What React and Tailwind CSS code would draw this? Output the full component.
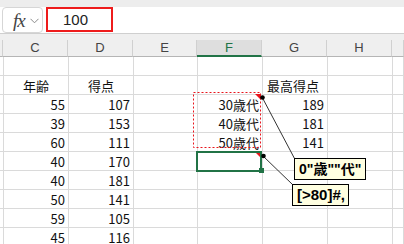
import React from "react";

const W = ["w-[3px]", "w-[65px]", "w-[65px]", "w-[64px]", "w-[65px]", "w-[65px]", "w-[65px]", "flex-1"];

const rows = [
  [null, null, null, null, null, null],
  [{ t: "年齢", a: "c" }, { t: "得点", a: "c" }, null, null, { t: "最高得点", a: "l" }, null],
  ["55", "107", null, "30歳代", "189", null],
  ["39", "153", null, "40歳代", "181", null],
  ["60", "111", null, "50歳代", "141", null],
  ["40", "170", null, null, null, null],
  ["40", "181", null, null, null, null],
  ["50", "141", null, null, null, null],
  ["59", "105", null, null, null, null],
  ["45", "116", null, null, null, null],
];

function Cell({ w, v }) {
  let text = null;
  let align = "justify-end pr-[3px]";
  if (v && typeof v === "object") {
    text = v.t;
    align = v.a === "c" ? "justify-center" : "justify-start pl-[4px]";
  } else if (v) {
    text = v;
  }
  return (
    <div className={`${w} h-full shrink-0 border-r border-b border-[#dadada] flex items-center ${align} overflow-hidden whitespace-nowrap`}>
      {text}
    </div>
  );
}

export default function App() {
  const headers = ["", "C", "D", "E", "F", "G", "H", ""];
  return (
    <div
      className="relative w-[404px] h-[244px] overflow-hidden bg-white text-[#111]"
      style={{ fontFamily: '"Noto Sans CJK JP", "Liberation Sans", sans-serif' }}
    >
      {/* top strip */}
      <div className="h-[7px] bg-[#ededed]" />
      {/* formula bar */}
      <div className="h-[27px] flex items-start bg-white border-b border-[#cfcfcf]">
        <div className="ml-[2px] w-[41px] h-[26px] border border-[#d6d6d6] rounded-[4px] flex items-center pl-[10px] gap-[5px]">
          <span
            className="italic text-[19px] leading-none text-[#444] tracking-[-1px]"
            style={{ fontFamily: '"Liberation Serif", serif' }}
          >
            fx
          </span>
          <svg width="9" height="6" viewBox="0 0 9 6" className="mt-[2px]">
            <path d="M0.5 0.8 L4.5 4.8 L8.5 0.8" fill="none" stroke="#8a8a8a" strokeWidth="1" />
          </svg>
        </div>
        <div className="ml-[3px] w-[67px] h-[25px] border-2 border-[#ee1c1c] flex items-center pl-[15px]">
          <span className="text-[15px] leading-none text-[#222]" style={{ fontFamily: '"Liberation Sans", sans-serif' }}>
            100
          </span>
        </div>
      </div>
      {/* strip above headers */}
      <div className="h-[6px] bg-[#efefef]" />
      {/* header row */}
      <div className="h-[17px] flex bg-[#efefef] text-[13px] text-[#444]" style={{ fontFamily: '"Liberation Sans", sans-serif' }}>
        {headers.map((h, i) =>
          h === "F" ? (
            <div key={i} className={`${W[i]} h-full shrink-0 border-r border-[#d0d0d0] border-b-2 border-b-[#217346] bg-[#dedede] flex items-center justify-center text-[#217346]`}>
              {h}
            </div>
          ) : (
            <div key={i} className={`${W[i]} h-full shrink-0 border-r border-b border-[#d0d0d0] border-b-[#b5b5b5] flex items-center justify-center`}>
              {h}
            </div>
          )
        )}
      </div>
      {/* grid */}
      <div className="text-[13px] leading-none">
        {rows.map((r, ri) => (
          <div key={ri} className="h-[19px] flex">
            <Cell w={W[0]} v={null} />
            {r.map((v, ci) => (
              <Cell key={ci} w={W[ci + 1]} v={v} />
            ))}
            <Cell w={W[7]} v={null} />
          </div>
        ))}
      </div>

      {/* selection box F6 */}
      <div className="absolute left-[196px] top-[151px] w-[66px] h-[21px] border-2 border-[#217346]" />
      <div className="absolute left-[259px] top-[168px] w-[5px] h-[5px] bg-[#217346]" />

      {/* overlay drawings */}
      <svg className="absolute left-0 top-0" width="404" height="244" viewBox="0 0 404 244">
        <rect x="193.5" y="92.5" width="67" height="55" fill="none" stroke="#e8141c" strokeWidth="1" strokeDasharray="2 2" />
        <polygon points="255,94 261,94 261,100" fill="#e8141c" />
        <polygon points="256,153 260,153 260,157" fill="#e8141c" />
        <line x1="262" y1="97" x2="294.5" y2="158.5" stroke="#333" strokeWidth="1" />
        <line x1="263" y1="156" x2="292.5" y2="184.5" stroke="#333" strokeWidth="1" />
        <circle cx="262.5" cy="97.5" r="2.3" fill="#000" />
        <circle cx="263.5" cy="156" r="2.3" fill="#000" />
      </svg>

      {/* comment boxes */}
      <div
        className="absolute left-[294px] top-[158px] w-[72px] h-[22px] bg-[#ffffe1] border border-black flex items-center pl-[4px] text-[14px] font-bold text-black whitespace-nowrap"
        style={{ fontFamily: '"Liberation Sans", "Noto Sans CJK JP", sans-serif' }}
      >
        0"歳""代"
      </div>
      <div
        className="absolute left-[292px] top-[184px] w-[57px] h-[22px] bg-[#ffffe1] border border-black flex items-center pl-[4px] text-[15px] font-bold text-black whitespace-nowrap"
        style={{ fontFamily: '"Liberation Sans", "Noto Sans CJK JP", sans-serif' }}
      >
        [&gt;80]#,
      </div>
    </div>
  );
}
